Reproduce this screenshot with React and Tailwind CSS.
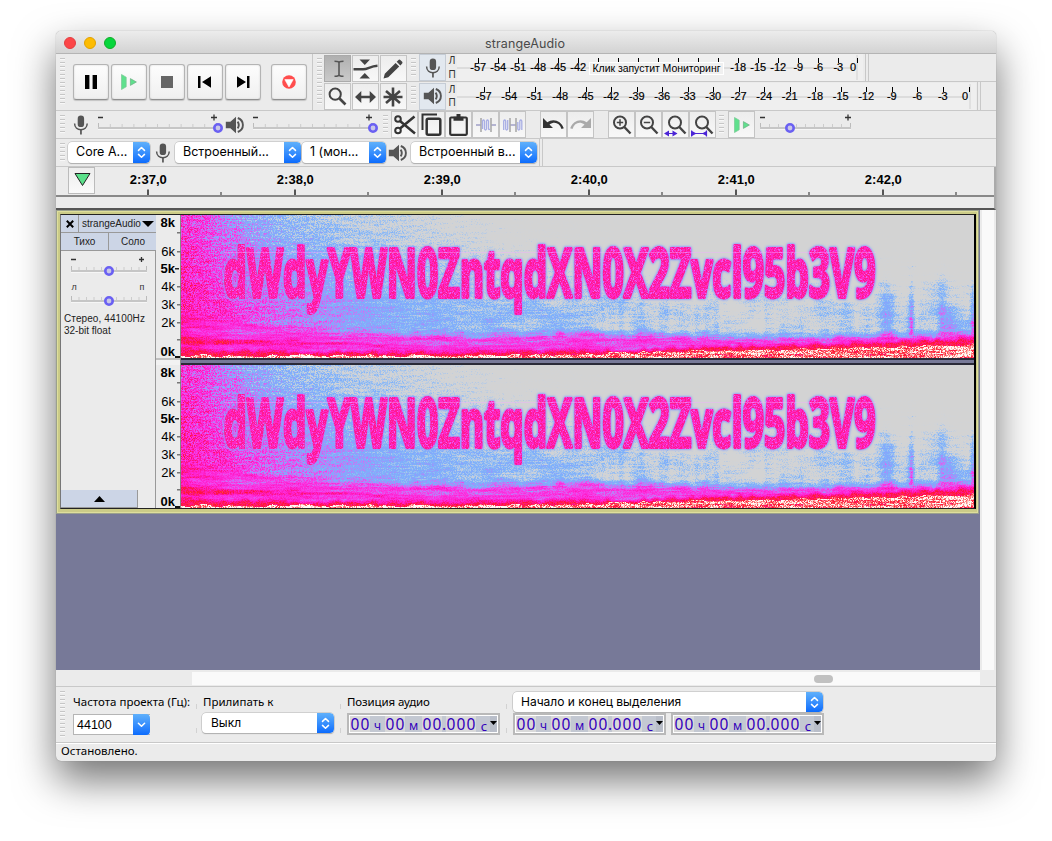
import { useEffect, useRef } from "react";

const HELV = "font-['Liberation_Sans',Arial,sans-serif]";
const UI = "font-[Inter,'Noto_Sans',sans-serif]";
const LUC = "font-['Noto_Sans','Open_Sans',sans-serif]";

/* ---------- spectrogram ---------- */

const SW = 793;
const SH = 143;

const STOPS = [
  [0.0, 211, 211, 211],
  [0.11, 209, 211, 214],
  [0.17, 176, 200, 232],
  [0.26, 125, 178, 250],
  [0.33, 136, 164, 252],
  [0.4, 194, 122, 246],
  [0.48, 246, 62, 232],
  [0.6, 255, 30, 205],
  [0.7, 255, 20, 130],
  [0.78, 255, 20, 50],
  [0.88, 255, 110, 110],
  [1.0, 255, 250, 245],
];

function colour(v) {
  if (v <= 0) return STOPS[0].slice(1);
  for (let i = 1; i < STOPS.length; i++) {
    if (v <= STOPS[i][0]) {
      const a = STOPS[i - 1];
      const b = STOPS[i];
      const t = (v - a[0]) / (b[0] - a[0]);
      return [1, 2, 3].map((k) => a[k] + (b[k] - a[k]) * t);
    }
  }
  return STOPS[STOPS.length - 1].slice(1);
}

function table(points, x) {
  for (let i = 1; i < points.length; i++) {
    if (x <= points[i][0]) {
      const [x0, y0] = points[i - 1];
      const [x1, y1] = points[i];
      return y0 + ((y1 - y0) * (x - x0)) / (x1 - x0);
    }
  }
  return points[points.length - 1][1];
}

function hash(x, y, s) {
  let h = (x * 374761393 + y * 668265263 + s * 1442695041) | 0;
  h = Math.imul(h ^ (h >>> 13), 1274126177);
  h ^= h >>> 16;
  return (h >>> 0) / 4294967295;
}

function smooth(x, y, s) {
  const xi = Math.floor(x);
  const yi = Math.floor(y);
  const fx = x - xi;
  const fy = y - yi;
  const u = fx * fx * (3 - 2 * fx);
  const w = fy * fy * (3 - 2 * fy);
  const a = hash(xi, yi, s) * (1 - u) + hash(xi + 1, yi, s) * u;
  const b = hash(xi, yi + 1, s) * (1 - u) + hash(xi + 1, yi + 1, s) * u;
  return a * (1 - w) + b * w - 0.5;
}

const TOP = [[0, 0.56], [22, 0.48], [42, 0.38], [65, 0.3], [90, 0.24], [120, 0.19], [160, 0.15], [220, 0.11], [280, 0.05], [330, 0], [400, -0.05], [793, -0.08]];
const MID = [[0, 0.6], [35, 0.5], [70, 0.41], [120, 0.32], [170, 0.23], [230, 0.18], [300, 0.12], [360, 0.06], [430, 0.01], [793, -0.03]];
const LOW = [[0, 0.63], [50, 0.52], [100, 0.41], [160, 0.34], [220, 0.27], [300, 0.22], [430, 0.19], [480, 0.13], [580, 0.14], [700, 0.11], [793, 0.15]];
const MAGENTA = [[0, 98], [60, 110], [110, 117], [140, 119], [200, 121], [270, 121], [330, 121], [400, 119], [500, 122], [600, 124], [690, 122], [793, 119]];
const RED = [[0, 136], [200, 138], [350, 137], [450, 136], [520, 133], [600, 131], [700, 128], [793, 124]];
const WHITE = [[0, 140], [250, 140], [400, 139], [500, 136], [650, 133], [793, 129]];
const PLUMES = [[703, 5, 90], [730, 2, 96], [762, 6, 96], [792, 2, 70]];

function level(x, y, seed) {
  const top = table(TOP, x);
  const mid = table(MID, x);
  const low = table(LOW, x);
  let v = y < 55 ? top + ((mid - top) * y) / 55 : mid + (low - mid) * Math.min(1, (y - 55) / 40);
  const grain = hash(x, y, seed) - 0.5;
  const streak = smooth(x / 14, y / 1.3, seed + 7);
  const blob = smooth(x / 22, y / 12, seed + 13);
  v += grain * (0.14 + 0.16 * Math.max(0, 1 - x / 190)) + streak * 0.13;
  if (y > 50 && x > 300) v += blob * 0.14;
  if (y > 78 && x > 420) v += smooth(x / 5, y / 60, seed + 3) * 0.14;
  for (const [px, w, reach] of PLUMES) {
    const d = Math.abs(x - px) / w;
    const h = (y - (SH - 20 - reach)) / reach;
    if (h > 0 && d < 3.5) v += Math.exp(-d * d * 0.5) * 0.27 * h;
  }
  const m = table(MAGENTA, x) + smooth(x / 9, 1, seed + 19) * 5;
  if (y > m - 8) {
    const k = Math.min(1, (y - m + 8) / 11);
    let b = 0.5 + streak * 0.14 + grain * 0.13 + smooth(x / 50, y / 2.5, seed + 23) * 0.14;
    b += 0.16 * Math.exp(-Math.pow((y - 125 - x * 0.025) / 3, 2)) * Math.max(0, 1 - x / 380);
    b += 0.14 * Math.max(0, 1 - x / 50);
    v = v * (1 - k) + Math.max(b, v * 0.8) * k;
  }
  const r = table(RED, x) + smooth(x / 6, 2, seed + 29) * 3;
  if (y > r - 4) {
    const k = Math.min(1, (y - r + 4) / 5);
    v = v * (1 - k) + (0.75 + grain * 0.14) * k;
  }
  const w = table(WHITE, x) + smooth(x / 7, 3, seed + 31) * 3;
  if (y > w) v = 0.9 + grain * 0.26 + streak * 0.24 + (x < 250 ? 0.08 : 0);
  return v;
}

function Spectrogram({ seed, id }) {
  const ref = useRef(null);
  useEffect(() => {
    const ctx = ref.current.getContext("2d");
    const img = ctx.createImageData(SW, SH);
    for (let y = 0; y < SH; y++) {
      for (let x = 0; x < SW; x++) {
        const c = colour(level(x, y, seed));
        const i = (y * SW + x) * 4;
        img.data[i] = c[0];
        img.data[i + 1] = c[1];
        img.data[i + 2] = c[2];
        img.data[i + 3] = 255;
      }
    }
    ctx.putImageData(img, 0, 0);
  }, [seed]);
  let hot = "";
  let cool = "";
  for (let y = 0; y < 61; y++)
    for (let x = 0; x < 67; x++) {
      const h = hash(x, y, 91);
      if (h > 0.6) hot += `M${x} ${y}h1v1h-1z`;
      else if (h < 0.1) cool += `M${x} ${y}h1v1h-1z`;
    }
  return (
    <div className="relative h-[143px] w-[793px] overflow-hidden">
      <canvas ref={ref} width={SW} height={SH} className="block" />
      <svg width={SW} height={SH} className="absolute inset-0">
        <defs>
          <pattern id={id} width="67" height="61" patternUnits="userSpaceOnUse">
            <rect width="67" height="61" fill="#ff26c4" />
            <path d={hot} fill="#ff1a92" />
            <path d={cool} fill="#e860f0" />
          </pattern>
        </defs>
        <text
          x="42.5"
          y="82"
          textLength="652"
          lengthAdjust="spacingAndGlyphs"
          fontSize="66"
          fill={`url(#${id})`}
          stroke={`url(#${id})`}
          strokeWidth="3.8"
          strokeLinejoin="round"
          className="font-['Open_Sans','Noto_Sans',sans-serif] font-bold [filter:drop-shadow(0_0_1px_#a888ff)_drop-shadow(0_0_1px_#7aaefc)]"
        >
          dWdyYWN0ZntqdXN0X2Zvcl95b3V9
        </text>
        <rect x="43" y="37" width="652" height="1" fill="#f3b0ff" opacity="0.4" />
      </svg>
    </div>
  );
}

/* ---------- small parts ---------- */

function Grip({ className }) {
  return <div className={`w-[5px] shrink-0 bg-[repeating-linear-gradient(to_bottom,#c6c6c6_0_1px,#f8f8f8_1px_2px,#ececec_2px_4px)] ${className}`} />;
}

function Big({ children }) {
  return (
    <div className="flex size-9 shrink-0 items-center justify-center rounded-[3px] border border-[#b4b4b4] border-b-[#8f8f8f] bg-linear-to-b from-[#fdfdfd] to-[#f0f0f0] shadow-[inset_0_0_2px_#d0d0d0,0_1px_1px_#c4c4c4]">
      {children}
    </div>
  );
}

function Tool({ children, className = "bg-linear-to-b from-[#ededed] to-[#f8f8f8] border-[#c4c4c4]" }) {
  return <div className={`flex size-[27px] shrink-0 items-center justify-center border ${className}`}>{children}</div>;
}

function Mic() {
  return (
    <svg width="16" height="20" viewBox="0 0 16 20" fill="#555" className="shrink-0">
      <rect x="4.7" y="0.5" width="6.4" height="11.6" rx="3.2" />
      <path d="M1.6 8.6C1.6 16.8 14.2 16.8 14.2 8.6" fill="none" stroke="#555" strokeWidth="1.5" />
      <path d="M7.1 14.5h1.7v5H7.1z" />
    </svg>
  );
}

function Speaker() {
  return (
    <svg width="20" height="18" viewBox="0 0 20 18" fill="#555" className="shrink-0">
      <path d="M.8 5.8h4.6L11 .8v16.4l-5.6-5H.8z" />
      <path d="M12.6 5.6q2.4 3.4 0 6.8M12.8 2c6.8 2.6 6.8 11.4 0 14" fill="none" stroke="#555" strokeWidth="1.9" />
    </svg>
  );
}

function Play({ size }) {
  return (
    <svg width={size} height={size} viewBox="0 0 18 18" fill="#5fe08d" className="shrink-0">
      <path d="M1.5 1.5 6.2 4.2v9.6L1.5 16.5z" stroke="#79c894" strokeWidth=".7" />
      <path d="m10.4 5.6 6 3.4-6 3.4z" stroke="#6fae84" strokeWidth=".7" />
    </svg>
  );
}

function Slider({ width, at, ticks, y = 14, h = 27, minus, plus }) {
  const step = (width - 4) / (ticks - 1);
  const small = width < 90;
  return (
    <svg width={width + 8} height={h} className={`block shrink-0 ${HELV}`}>
      {minus ? (
        <>
          <text x="2.5" y={y - 10} fontSize="9" fill="#333">{minus}</text>
          <text x={width - 6} y={y - 10} fontSize="9" textAnchor="middle" fill="#333">{plus}</text>
        </>
      ) : (
        <path
          d={small ? `M2 ${y - 10.5}h5M${width - 9} ${y - 10.5}h5M${width - 6.5} ${y - 13}v5` : `M2 ${y - 9.5}h5M${width - 7} ${y - 9.5}h6M${width - 4} ${y - 12.5}v6`}
          stroke="#333"
          strokeWidth="1.3"
        />
      )}
      {Array.from({ length: ticks }, (_, i) => (
        <rect key={i} x={2 + i * step} y={y - (i % (ticks - 1) === 0 ? 4 : 3)} width="1" height={i % (ticks - 1) === 0 ? 6 : 3} fill={i % (ticks - 1) === 0 ? "#bbb" : "#ccc"} />
      ))}
      <rect x="2" y={y} width={width - 3} height="2" fill="#c6c6c6" />
      <rect x="2" y={y + 2} width={width - 3} height="1" fill="#f6f6f6" />
      <circle cx={at} cy={y + 1} r="3.7" fill="#c9c7e8" stroke="#6a60f2" strokeWidth="2.6" />
    </svg>
  );
}

function Knob({ single, className = "h-5" }) {
  return (
    <div className={`flex w-[17px] shrink-0 items-center justify-center rounded-r-[4px] bg-linear-to-b from-[#5fb0fb] to-[#0a6bfd] ${className}`}>
      <svg width="9" height="13" viewBox="0 0 9 13" fill="none" stroke="#fff" strokeWidth="1.5" strokeLinecap="round" strokeLinejoin="round">
        {single ? <path d="m1.4 5.2 3.1 3 3.1-3" /> : <path d="m1.5 4.4 3-2.9 3 2.9M1.5 8.4l3 2.9 3-2.9" />}
      </svg>
    </div>
  );
}

function Select({ children, className, textClass = "text-[12.5px] pl-2" }) {
  return (
    <div className={`flex shrink-0 items-center overflow-hidden rounded-[4px] bg-white shadow-[0_0_0_.5px_#b5b5b5,0_1px_1px_#aaa] ${UI} ${className}`}>
      <span className={`flex-1 whitespace-nowrap text-black ${textClass}`}>{children}</span>
      <Knob className="h-full" />
    </div>
  );
}

function Meter({ width, start, step, end, hidden }) {
  const labels = Array.from({ length: 19 }, (_, i) => -57 + i * 3);
  return (
    <svg width={width} height="27" className={`block shrink-0 ${HELV}`} fontSize="11">
      <rect width={width} height="27" fill="#efefef" />
      <rect y="13" width={width - 8} height="2" fill="#dcdcdc" />
      <rect x={width - 7} y="1" width="2" height="25" fill="#e0e0e0" />
      {labels.map((n, i) => (
        <g key={n}>
          <rect x={Math.round(start + i * step)} y="4" width="1" height="5" fill="#000" />
          {!(hidden && n > -42 && n < -18) && (
            <text x={start + i * step + 0.3} y="17" textAnchor="middle" stroke="#000" strokeWidth="0.2">{n}</text>
          )}
        </g>
      ))}
      <rect x={end} y="4" width="1" height="5" fill="#000" />
      <text x={end - 7} y="17" stroke="#000" strokeWidth="0.2">0</text>
      {hidden && (
        <g>
          <rect x="132.5" y="8.5" width="134" height="12" fill="#f0f0f0" stroke="#fff" />
          <text x="135.5" y="18" textLength="128" fontSize="10.5">Клик запустит Мониторинг</text>
        </g>
      )}
    </svg>
  );
}

function LR() {
  return (
    <div className={`flex h-[27px] w-[10px] shrink-0 flex-col items-center justify-around text-[10px] leading-[13px] text-[#333] ${HELV}`}>
      <span>Л</span>
      <span>П</span>
    </div>
  );
}

function Timeline() {
  const majors = ["2:37,0", "2:38,0", "2:39,0", "2:40,0", "2:41,0", "2:42,0"];
  return (
    <svg width="898" height="28" className={`block ${HELV}`} fontSize="13" fontWeight="bold">
      {majors.map((m, i) => (
        <g key={m}>
          <text x={53.3 + i * 147} y="17" textAnchor="middle">{m}</text>
          <rect x={52 + i * 147} y="22.5" width="2" height="6" fill="#555" />
          <rect x={125 + i * 147} y="25" width="2" height="4" fill="#888" />
        </g>
      ))}
    </svg>
  );
}

const FREQ = [["8k", 7, true], [null, 17], ["6k", 36], ["5k", 53, true], ["4k", 71], ["3k", 89], ["2k", 107], [null, 124], ["0k", 136, true]];

function FreqScale() {
  return (
    <svg width="25" height="143" className={`block ${HELV}`} fontSize="13">
      {FREQ.map(([t, y, bold], i) => (
        <g key={i}>
          {t && (
            <text x="19" y={y + 4.6} textAnchor="end" fontWeight={bold ? "bold" : "normal"}>{t}</text>
          )}
          {y > 10 && y < 130 && <rect x={bold ? 19 : 21} y={y} width="4" height="1.5" fill={bold ? "#222" : "#777"} />}
        </g>
      ))}
      <rect x="19" y="141" width="5" height="2" fill="#111" />
    </svg>
  );
}

const TIME_CELLS = {
  " ": "w-[4px]",
  ".": "w-[4px] text-[15.5px]",
  ч: "w-[7px] pt-[2px] text-[12px]",
  м: "w-[9px] pt-[2px] text-[12px]",
  с: "w-[8px] pt-[2px] text-[13px]",
};

function TimeBox() {
  return (
    <div className="flex h-[22px] w-[153px] shrink-0 items-center border-2 border-[#b9b9b9] bg-[#c3c8d2] p-px shadow-[inset_0_0_0_1px_#fff]">
      <div className="flex h-[16px] flex-1 items-center font-['Noto_Sans','Open_Sans',sans-serif] leading-4 text-[#3300bb]">
        {"00 ч 00 м 00.000 с".split("").map((c, i) => (
          <span key={i} className={`flex h-4 shrink-0 justify-center ${TIME_CELLS[c] ?? "w-[10px] bg-[#d9d9d9] text-[15.5px]"}`}>{c}</span>
        ))}
      </div>
      <div className="flex h-4 w-[7px] shrink-0 items-center justify-center bg-[#b9bec9] pb-[2px]">
        <svg width="7" height="4"><path d="M0 0h7L3.5 4z" /></svg>
      </div>
    </div>
  );
}

function DashSep({ className }) {
  return (
    <div className={`flex h-[29px] w-px shrink-0 flex-col justify-between ${className}`}>
      <i className="h-[5px] bg-[#d2d2d2]" />
      <i className="h-[5px] bg-[#d2d2d2]" />
    </div>
  );
}

/* ---------- toolbars ---------- */

function Transport() {
  return (
    <div className="flex h-14 w-[257px] shrink-0 items-center border-r border-[#c8c8c8] pl-1">
      <Grip className="h-[48px]" />
      <div className="ml-2 flex gap-[2px]">
        <Big><svg width="12" height="14"><path d="M0 0h4.4v14H0zM7.6 0H12v14H7.6z" /></svg></Big>
        <Big><Play size={18} /></Big>
        <Big><div className="size-3 bg-[#666]" /></Big>
        <Big><svg width="14" height="12"><path d="M0 0h2.5v12H0zM13 .3v11.4L4 6z" /></svg></Big>
        <Big><svg width="14" height="12"><path d="M11 0h2.5v12H11zM1 .3v11.4L10 6z" /></svg></Big>
        <div className="ml-2">
          <Big>
            <svg width="14" height="14" viewBox="0 0 14 14">
              <circle cx="7" cy="7" r="6.8" fill="#ff4d4d" />
              <path d="M2.8 4.6h8.4L7 12z" fill="#fff" stroke="#fff" strokeWidth=".6" />
            </svg>
          </Big>
        </div>
      </div>
    </div>
  );
}

function Tools() {
  return (
    <div className="grid shrink-0 grid-cols-3 gap-px pt-px">
      <Tool className="border-[#aaa] bg-linear-to-b from-[#b0b0b0] to-[#cacaca]">
        <svg width="12" height="18" fill="none" stroke="#555" strokeWidth="1.6" className="ml-[2px]">
          <path d="M1.5 1.2c3 0 4.5.3 4.5 1.5v12c0 1.2-1.5 1.5-4.5 1.5M10.5 1.2c-3 0-4.5.3-4.5 1.5M6 14.7c0 1.2 1.5 1.5 4.5 1.5" />
        </svg>
      </Tool>
      <Tool>
        <svg width="25" height="22" viewBox="0 0 25 22" fill="#444" className="shrink-0">
          <path d="M6.5 1.5H17L11.8 7zM6.5 20.5H17L11.8 15z" />
          <path d="M.5 11.3H10c5 0 7-3 14.5-3.5" fill="none" stroke="#444" strokeWidth="2.5" />
        </svg>
      </Tool>
      <Tool>
        <svg width="20" height="20" viewBox="0 0 19 19" fill="#444" className="mr-px shrink-0">
          <path d="m.5 18.5 1.2-4.6L12 3.7l3.4 3.4L5 17.4zM13 2.7l1.5-1.6c.7-.7 1.5-.7 2.2 0L18 2.4c.7.7.7 1.5 0 2.2l-1.5 1.6z" />
        </svg>
      </Tool>
      <Tool>
        <svg width="19" height="19" viewBox="0 0 19 19" fill="none" stroke="#444">
          <circle cx="7.2" cy="7.2" r="5.6" strokeWidth="2" />
          <path d="m11.5 11.5 6 6" strokeWidth="2.6" />
        </svg>
      </Tool>
      <Tool>
        <svg width="21" height="12" viewBox="0 0 21 12" fill="#444"><path d="M0 6 6.3 0v4.7h8.4V0L21 6l-6.3 6V7.3H6.3V12z" /></svg>
      </Tool>
      <Tool>
        <svg width="20" height="20" viewBox="0 0 20 20" stroke="#444" strokeWidth="2.6" className="mr-px">
          <path d="M10 .5v19M.5 10h19M3 4l14 12M17 4 3 16" />
        </svg>
      </Tool>
    </div>
  );
}

function EditTools() {
  return (
    <>
      <Tool>
        <svg width="22" height="20" viewBox="0 0 22 20" fill="none" stroke="#333" className="shrink-0">
          <circle cx="4" cy="4" r="2.8" strokeWidth="2" />
          <circle cx="4" cy="15.5" r="2.8" strokeWidth="2" />
          <path d="M6 6 21 18.500M6 13.500 20.500 1.500" strokeWidth="2.500" />
        </svg>
      </Tool>
      <Tool>
        <svg width="21" height="23" viewBox="0 0 21 23" fill="none" stroke="#333" strokeWidth="2">
          <path d="M1.500 17V1.500H16" />
          <rect x="5.7" y="5.7" width="13.6" height="16" rx="1.5" strokeWidth="2.500" />
        </svg>
      </Tool>
      <Tool>
        <svg width="19" height="22" viewBox="0 0 19 22" fill="none" stroke="#333">
          <rect x="1.2" y="3.5" width="16.6" height="17.3" rx="1" strokeWidth="2.200" />
          <path d="M4.500 4.800h10M7.500 2h4" strokeWidth="4" />
        </svg>
      </Tool>
      <Tool>
        <svg width="20" height="14" viewBox="0 0 20 14" fill="none" stroke="#a8aee4" strokeWidth="1.3">
          <path d="M0 7h5M15 7h5" stroke="#a0a0c8" strokeWidth="1.6" />
          <path d="M5 0v14M15 0v14" stroke="#aaa" strokeWidth="1.6" />
          <path d="M6.500 11V3q1-2 2 0v8q1 2 2 0V3q1-2 2 0v8q.5 1 1.500 0" />
        </svg>
      </Tool>
      <Tool>
        <svg width="20" height="14" viewBox="0 0 20 14" fill="none" stroke="#a8aee4" strokeWidth="1.3">
          <path d="M7 7h6" stroke="#a0a0c8" strokeWidth="1.6" />
          <path d="M7 0v14M13 0v14" stroke="#aaa" strokeWidth="1.6" />
          <path d="M.7 12V3q1-2 2 0v8q1 2 2 0V2M14.800 4v7q1 2 2 0V3q1-2 2 0v9" />
        </svg>
      </Tool>
    </>
  );
}

function Lens({ children, shift = "translate(0 0)" }) {
  return (
    <svg width="24" height="24" viewBox="0 0 24 24" fill="none" stroke="#444" className="shrink-0">
      <g transform={shift}>
        <circle cx="10" cy="9.5" r="6" strokeWidth="2" />
        <path d="m14.300 14 6.200 6.500" strokeWidth="2.4" />
      </g>
      {children}
    </svg>
  );
}

/* ---------- track ---------- */

function TrackPanel() {
  return (
    <div className={`flex h-[293px] w-[95px] shrink-0 flex-col bg-[#ebebeb] text-[10px] text-[#222] ${HELV}`}>
      <div className="flex h-[18px] shrink-0 gap-px border-b border-[#999] bg-[#ccd5e6]">
        <div className="flex w-[18px] items-center justify-center border-r border-[#999]">
          <svg width="8" height="8" stroke="#000" strokeWidth="2" className="ml-px"><path d="m.8.8 6.400 6.400M7.200.8.8 7.200" /></svg>
        </div>
        <div className="flex flex-1 items-center pl-[2px]">
          <span>strangeAudio</span>
          <svg width="12" height="6" className="ml-px shrink-0"><path d="M0 0h12L6 6z" /></svg>
        </div>
      </div>
      <div className="flex h-[18px] shrink-0 border-b border-[#999] bg-[#ccd5e6] leading-[17px]">
        <span className="w-12 border-r border-[#999] text-center">Тихо</span>
        <span className="flex-1 pl-px text-center">Соло</span>
      </div>
      <div className="flex flex-1 flex-col border-r border-[#999]">
        <div className="ml-2 mt-[3px]"><Slider width={79} at={40} ticks={11} y={16} h={27} /></div>
        <div className="ml-2"><Slider width={79} at={40} ticks={11} y={19} h={30} minus="л" plus="п" /></div>
        <div className="mt-[2px] pl-[3px] leading-3">
          <div className="whitespace-nowrap tracking-[0.01em]">Стерео, 44100Hz</div>
          <div>32-bit float</div>
        </div>
        <div className="mt-auto flex h-[18px] w-[77px] items-center justify-center border-b border-r border-[#999] bg-[#ccd5e6]">
          <svg width="11" height="6"><path d="M0 6h11L5.500 0z" /></svg>
        </div>
      </div>
    </div>
  );
}

function Track() {
  return (
    <div className="flex h-[304px] w-[923px] flex-col border border-[#9aa08c] bg-[#cbcb87] pl-[3px] pt-[3px] shadow-[inset_0_0_0_1px_#dede9c]">
      <div className="flex h-[295px] w-[916px] border-y border-[#222] border-l border-l-[#777] border-r-2 border-r-black">
        <TrackPanel />
        <div className="flex w-[25px] shrink-0 flex-col border-r border-[#888] bg-[#ebebeb]">
          <FreqScale />
          <div className="h-[7px] shrink-0 border-t-2 border-[#c0c0c0] bg-[#f2f2f2]" />
          <FreqScale />
        </div>
        <div className="w-[793px]">
          <Spectrogram seed={11} id="speckle-a" />
          <div className="h-[7px] border-y-2 border-[#2a2a38] bg-[#777998]" />
          <Spectrogram seed={11} id="speckle-b" />
        </div>
      </div>
    </div>
  );
}

/* ---------- window ---------- */

export default function App() {
  return (
    <div className="h-[841px] w-[1052px] overflow-hidden bg-white pl-[56px] pt-[31px] text-black">
      <div className="flex h-[730px] w-[940px] flex-col overflow-hidden rounded-[5px] bg-[#ebebeb] shadow-[0_0_1px_#777,0_19px_40px_rgba(0,0,0,0.55)]">
        <div className="flex h-[23px] shrink-0 items-center border-b border-[#b4b4b4] bg-linear-to-b from-[#ececec] to-[#d3d3d3] pl-2">
          <div className="flex w-[52px] gap-2 pt-px">
            <i className="size-3 rounded-full border border-[#e33e41] bg-[#fc4648]" />
            <i className="size-3 rounded-full border border-[#e2a100] bg-[#fdbc02]" />
            <i className="size-3 rounded-full border border-[#12ac28] bg-[#06d63c]" />
          </div>
          <div className={`flex-1 pr-[62px] pt-[4px] text-center text-[12.5px] tracking-[0.01em] text-[#4a4a4a] ${UI}`}>strangeAudio</div>
        </div>

        <div className="flex h-[57px] shrink-0 border-b border-[#c8c8c8]">
          <Transport />
          <div className="flex w-[11px] items-center pl-1"><Grip className="h-[48px]" /></div>
          <Tools />
          <div className="flex flex-1 flex-col">
            <div className="flex h-[28px] items-center border-b border-[#c8c8c8]">
              <div className="w-[12px] pl-[4px]"><Grip className="h-[20px]" /></div>
              <Tool className="border-[#c5ccd5] bg-[#e2e8ef]"><Mic /></Tool>
              <div className="ml-px"><LR /></div>
              <Meter width={406} start={21} step={20} end={400} hidden />
              <div className="ml-[2px] h-full w-[4px] border-x border-[#c8c8c8]" />
            </div>
            <div className="flex h-[28px] items-center">
              <div className="w-[12px] pl-[4px]"><Grip className="h-[20px]" /></div>
              <Tool className="border-[#c5ccd5] bg-[#e2e8ef]"><Speaker /></Tool>
              <div className="ml-px"><LR /></div>
              <Meter width={519} start={26.5} step={25.5} end={512} />
              <div className="ml-px h-full w-[4px] border-x border-[#c8c8c8]" />
            </div>
          </div>
        </div>

        <div className="flex h-[28px] shrink-0 items-center border-b border-[#c8c8c8] pl-1">
          <Grip className="h-[20px]" />
          <div className="ml-2 w-[23px]"><Mic /></div>
          <div className="w-[129px]"><Slider width={122} at={122} ticks={11} y={16} /></div>
          <Speaker />
          <div className="ml-[6px] w-[132px]"><Slider width={122} at={122} ticks={11} y={16} /></div>
          <Grip className="h-[20px]" />
          <div className="ml-[3px] flex"><EditTools /></div>
          <div className="ml-[14px] flex">
            <Tool>
              <svg width="21" height="14" viewBox="0 0 21 14" fill="#333"><path d="M0 0v10h10L6.500 6.500c5-3.500 10-1.500 12 4.500l2.300-.8C18 2.500 10 0 4.300 4.300z" /></svg>
            </Tool>
            <Tool>
              <svg width="21" height="14" viewBox="0 0 21 14" fill="#aaa"><path d="M21 0v10H11l3.500-3.500c-5-3.500-10-1.500-12 4.500L.2 10.200C3 2.500 11 0 16.700 4.300z" /></svg>
            </Tool>
          </div>
          <div className="ml-[14px] flex">
            <Tool><Lens><path d="M6.800 9.500h6.400M10 6.300v6.400" strokeWidth="1.5" /></Lens></Tool>
            <Tool><Lens><path d="M6.800 9.500h6.400" strokeWidth="1.5" /></Lens></Tool>
            <Tool>
              <Lens shift="translate(1 0)">
                <g fill="#4b24d6" stroke="#4b24d6">
                  <path d="M1 20.500h12" />
                  <path d="m0 20.500 5-3v6zM13.500 20.500l-5-3v6z" stroke="none" />
                </g>
              </Lens>
            </Tool>
            <Tool>
              <Lens shift="translate(1 0)">
                <g fill="#4b24d6" stroke="#4b24d6">
                  <path d="M.6 17.500v6M15.500 17.500v6M2 20.500h12" strokeWidth="1.2" />
                  <path d="m1 18 4.500 2.500L1 23zM15.500 18 11 20.500l4.500 2.500z" stroke="none" />
                </g>
              </Lens>
            </Tool>
          </div>
          <div className="ml-[3px] w-[9px]"><Grip className="h-[20px]" /></div>
          <Tool><Play size={18} /></Tool>
          <div className="ml-[3px]"><Slider width={94} at={32} ticks={11} y={16} /></div>
        </div>

        <div className="flex h-[28px] shrink-0 items-center border-b border-[#c8c8c8] pl-1">
          <Grip className="h-[20px]" />
          <Select className="ml-[3px] h-[21px] w-[82px]">Core A...</Select>
          <div className="ml-[5px] w-[20px]"><Mic /></div>
          <Select className="h-[21px] w-[126px]">Встроенный...</Select>
          <Select className="ml-px h-[21px] w-[84px]">1 (мон...</Select>
          <div className="ml-[2px] w-[23px]"><Speaker /></div>
          <Select className="h-[21px] w-[126px]">Встроенный в...</Select>
          <div className="ml-[2px] h-full w-[4px] border-x border-[#c8c8c8]" />
        </div>

        <div className="flex h-[43px] shrink-0 flex-col border-b-2 border-[#555] border-r-2 border-r-[#aaa]">
          <div className="flex h-[30px] shrink-0 border-b-2 border-[#888] pl-3">
            <Tool className="border-[#bbb] bg-linear-to-b from-[#ededed] to-[#fafafa]">
              <svg width="17" height="15" className="-mt-[3px] ml-px shrink-0"><path d="M1 1.500h15L8.500 13.500z" fill="#5be08a" stroke="#222" /></svg>
            </Tool>
            <Timeline />
          </div>
        </div>

        <div className="flex h-[460px] shrink-0">
          <div className="w-[924px] bg-[#777998]"><Track /></div>
          <div className="flex-1 border-x-2 border-[#ebebeb] bg-[#fafafa]" />
        </div>

        <div className="h-[16px] shrink-0 pl-[136px] pr-4 pt-[2px]">
          <div className="flex h-[13px] items-center bg-[#fafafa] pl-[622px]"><i className="h-2 w-[19px] rounded-full bg-[#c1c1c1]" /></div>
        </div>

        <div className={`flex h-[57px] shrink-0 border-y border-[#c8c8c8] pl-1 text-[11.5px] ${LUC}`}>
          <div className="pt-1"><Grip className="h-[47px]" /></div>
          <div className="ml-2 w-[117px] whitespace-nowrap pt-[6px]">
            <div className="h-[21px] leading-[18px]">Частота проекта (Гц):</div>
            <div className="flex h-[21px] w-[77px] border border-r-0 border-[#b5b5b5] bg-white">
              <span className={`flex-1 pl-[3px] text-[12.5px] leading-[21px] ${HELV}`}>44100</span>
              <Knob single className="-my-px h-[21px]" />
            </div>
          </div>
          <DashSep className="ml-[6px] mt-[17px]" />
          <div className="ml-[5px] w-[132px] pt-[6px]">
            <div className="h-[20px] pl-px leading-[18px]">Прилипать к</div>
            <Select className="h-[20px] w-[132px]" textClass="text-[12px] pl-[9px]">Выкл</Select>
          </div>
          <DashSep className="ml-[6px] mt-[17px]" />
          <div className="ml-[6px] w-[153px] pt-[6px]">
            <div className="h-[20px] leading-[18px] tracking-[-0.01em]">Позиция аудио</div>
            <TimeBox />
          </div>
          <DashSep className="ml-[6px] mt-[17px]" />
          <div className="ml-[6px] w-[312px] pt-[5px]">
            <Select className="h-[20px] w-[310px]" textClass="text-[12px] pl-2">Начало и конец выделения</Select>
            <div className="mt-px flex gap-[5px]"><TimeBox /><TimeBox /></div>
          </div>
        </div>
        <div className={`flex-1 border-t border-white pl-[5px] text-[11.5px] leading-[14px] ${LUC}`}>Остановлено.</div>
      </div>
    </div>
  );
}
